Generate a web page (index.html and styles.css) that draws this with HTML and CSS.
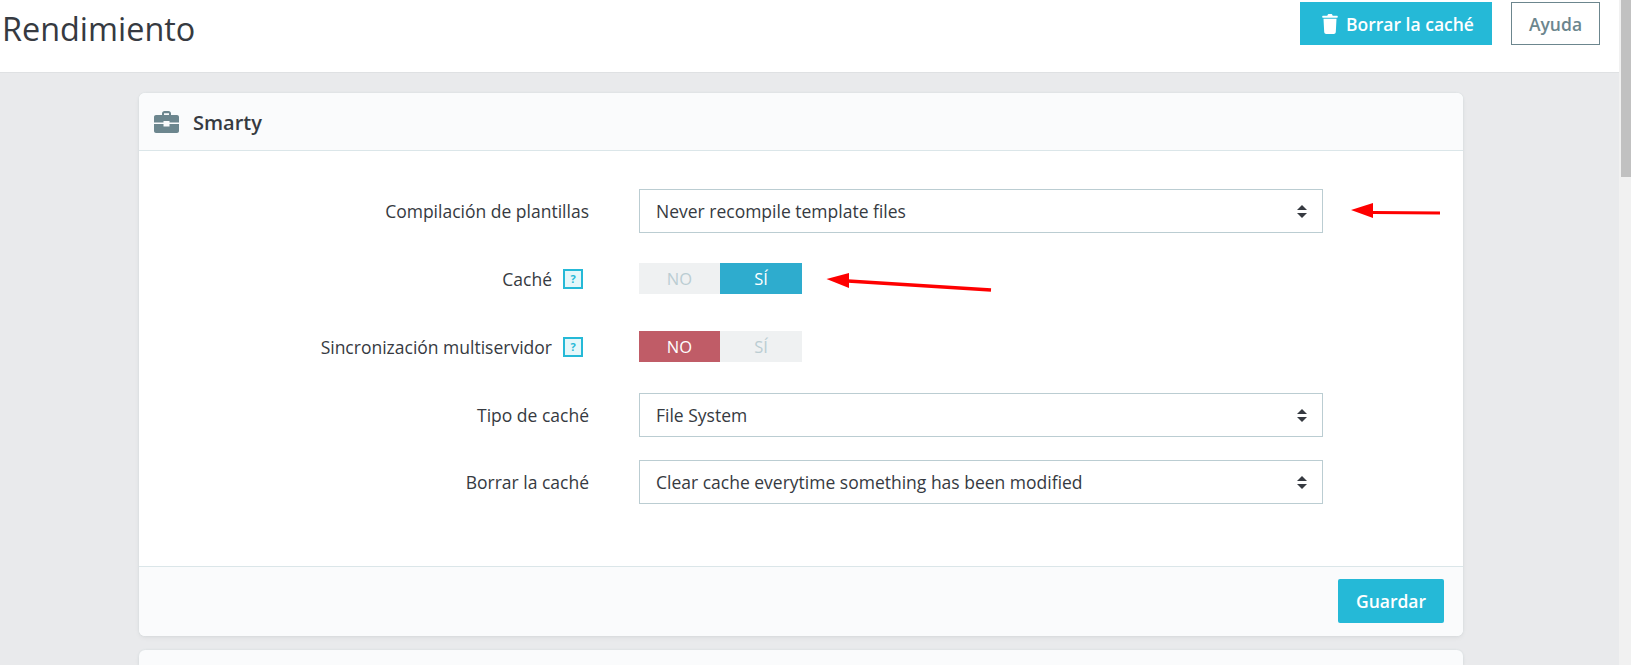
FILE: index.html
```html
<!DOCTYPE html>
<html lang="es">
<head>
<meta charset="utf-8">
<title>Rendimiento</title>
<link rel="stylesheet" href="styles.css">
</head>
<body>
<div class="app">
  <main class="main">
    <header class="topbar">
      <h1 class="title">Rendimiento</h1>
      <div class="actions">
        <a class="btn btn-primary btn-clear">
          <svg class="trash" viewBox="0 0 16 20" width="16" height="20"><path d="M5.5 1.2C5.700.5 6.200 0 7 0h2c.8 0 1.300.5 1.500 1.200l.2.5h4.100c.6 0 1 .4 1 1s-.4 1-1 1H1.200c-.6 0-1-.4-1-1s.4-1 1-1h4.100zM1.500 4.800h13l-.7 13.200c-.1 1.200-.9 2-2 2H4.200c-1.100 0-1.900-.8-2-2z" fill="#fff"/></svg>
          <span>Borrar la caché</span>
        </a>
        <a class="btn btn-outline">Ayuda</a>
      </div>
    </header>
    <div class="content">
      <section class="card">
        <div class="card-head">
          <svg class="case" viewBox="0 0 25 22" width="25" height="22"><path d="M8 4V2.500C8 1.100 9.100 0 10.500 0h4C15.900 0 17 1.100 17 2.500V4h-2V2.300h-5V4z" fill="#6c868e"/><path d="M2 4h21c1.100 0 2 .9 2 2v5.500h-9.500V10h-6v1.500H0V6c0-1.100.9-2 2-2zM0 13h9.500v2.500h6V13H25v7c0 1.100-.9 2-2 2H2c-1.100 0-2-.9-2-2z" fill="#6c868e"/></svg>
          <span>Smarty</span>
        </div>
        <div class="form">
          <div class="row">
            <label class="label">Compilación de plantillas</label>
            <div class="select">Never recompile template files<span class="carets"></span></div>
          </div>
          <div class="row row-switch">
            <label class="label">Caché<span class="help">?</span></label>
            <div class="switch"><span class="opt">NO</span><span class="opt on-yes">SÍ</span></div>
          </div>
          <div class="row row-switch">
            <label class="label">Sincronización multiservidor<span class="help">?</span></label>
            <div class="switch"><span class="opt on-no">NO</span><span class="opt">SÍ</span></div>
          </div>
          <div class="row">
            <label class="label">Tipo de caché</label>
            <div class="select">File System<span class="carets"></span></div>
          </div>
          <div class="row">
            <label class="label">Borrar la caché</label>
            <div class="select">Clear cache everytime something has been modified<span class="carets"></span></div>
          </div>
        </div>
        <div class="card-foot"><a class="btn btn-primary btn-save">Guardar</a></div>
      </section>
      <section class="card card-next"></section>
    </div>
  </main>
  <aside class="scrollbar"><div class="thumb"></div></aside>
</div>
<svg class="arrows" width="1631" height="665" viewBox="0 0 1631 665">
  <path d="M1373 212.500L1440 213" stroke="#fe0000" stroke-width="3" fill="none"/>
  <path d="M1351 210L1373 203V218z" fill="#fe0000"/>
  <path d="M848 281L991 290" stroke="#fe0000" stroke-width="3.500" fill="none"/>
  <path d="M826.500 279L849 273V288z" fill="#fe0000"/>
</svg>
</body>
</html>
```
FILE: styles.css
```css
* { box-sizing: border-box; }
html, body { margin: 0; height: 665px; overflow: hidden; }
body { font-family: "Open Sans", sans-serif; color: #363a41; background: #e9eaec; position: relative; }
.app { display: flex; height: 665px; }
.main { flex: 1; min-width: 0; }
.scrollbar { width: 12px; background: #f1f1f1; padding-left: 2px; }
.thumb { height: 177px; background: #c1c1c1; }
.topbar { height: 73px; background: #fff; border-bottom: 1px solid #dfe1e3; display: flex; justify-content: space-between; align-items: flex-start; padding-left: 2px; }
.title { margin: 6px 0 0; font-size: 32.4px; line-height: 44px; font-weight: 400; color: #363a41; }
.actions { display: flex; gap: 19px; padding: 2px 19px 0 0; }
.btn { display: flex; align-items: center; justify-content: center; font-size: 17.5px; font-weight: 600; height: 43px; }
.btn-primary { background: #25b9d7; color: #fff; }
.btn-clear { width: 192px; gap: 8px; padding-left: 4px; }
.btn-outline { width: 89px; background: #fff; border: 1px solid #6c868e; color: #6c868e; }
.trash { flex: none; }
.content { padding: 20px 156px 0 139px; }
.card { background: #fff; border-radius: 6px; box-shadow: 0 2px 5px rgba(0,0,0,.05), 0 0 2px rgba(170,195,195,.3); }
.card-next { margin-top: 14px; height: 15px; background: #fafbfc; border-radius: 6px 6px 0 0; }
.card-head { height: 58px; background: #fafbfc; border-bottom: 1px solid #dbe6e9; border-radius: 6px 6px 0 0; display: flex; align-items: center; padding: 1px 0 0 15px; gap: 14px; font-size: 20px; font-weight: 600; color: #363a41; }
.form { padding: 38px 0 62px; display: flex; flex-direction: column; gap: 23px; }
.row { display: flex; align-items: center; }
.row-switch { padding: 7px 0; }
.row-switch + .row:not(.row-switch) { margin-top: 1px; }
.label { width: 450px; display: flex; justify-content: flex-end; align-items: center; font-size: 17.5px; color: #363a41; }
.help { width: 20px; height: 20px; margin: 0 -31px 0 11px; flex: none; border: 2px solid #25b9d7; background: #e5f7fa; color: #25b9d7; font-size: 11px; font-weight: 700; line-height: 16px; text-align: center; }
.row-switch .label { padding-right: 37px; }
.select { margin-left: 50px; width: 684px; height: 44px; position: relative; border: 1px solid #bbcdd2; background: #fff; padding-left: 16px; font-size: 17.5px; line-height: 42px; color: #363a41; }
.carets { position: absolute; right: 15px; top: 15px; width: 10px; height: 13px; }
.carets::before, .carets::after { content: ""; position: absolute; left: 0; border-left: 5px solid transparent; border-right: 5px solid transparent; }
.carets::before { top: 0; border-bottom: 5.5px solid #363a41; }
.carets::after { bottom: 0; border-top: 5.5px solid #363a41; }
.switch { margin-left: 50px; width: 163px; height: 31px; display: flex; background: #eff1f2; }
.opt { text-align: center; font-size: 16.5px; line-height: 31px; color: #bbcdd2; }
.opt:first-child { width: 81px; }
.opt:last-child { width: 82px; }
.on-yes { background: #2eacce; color: #fff; }
.on-no { background: #c05c67; color: #fff; }
.card-foot { height: 70px; background: #fafbfc; border-top: 1px solid #dbe6e9; border-radius: 0 0 6px 6px; display: flex; justify-content: flex-end; align-items: flex-start; padding: 12px 19px 0 0; }
.btn-save { width: 106px; height: 44px; border-radius: 2px; }
.arrows { position: absolute; left: 0; top: 0; pointer-events: none; }
```
